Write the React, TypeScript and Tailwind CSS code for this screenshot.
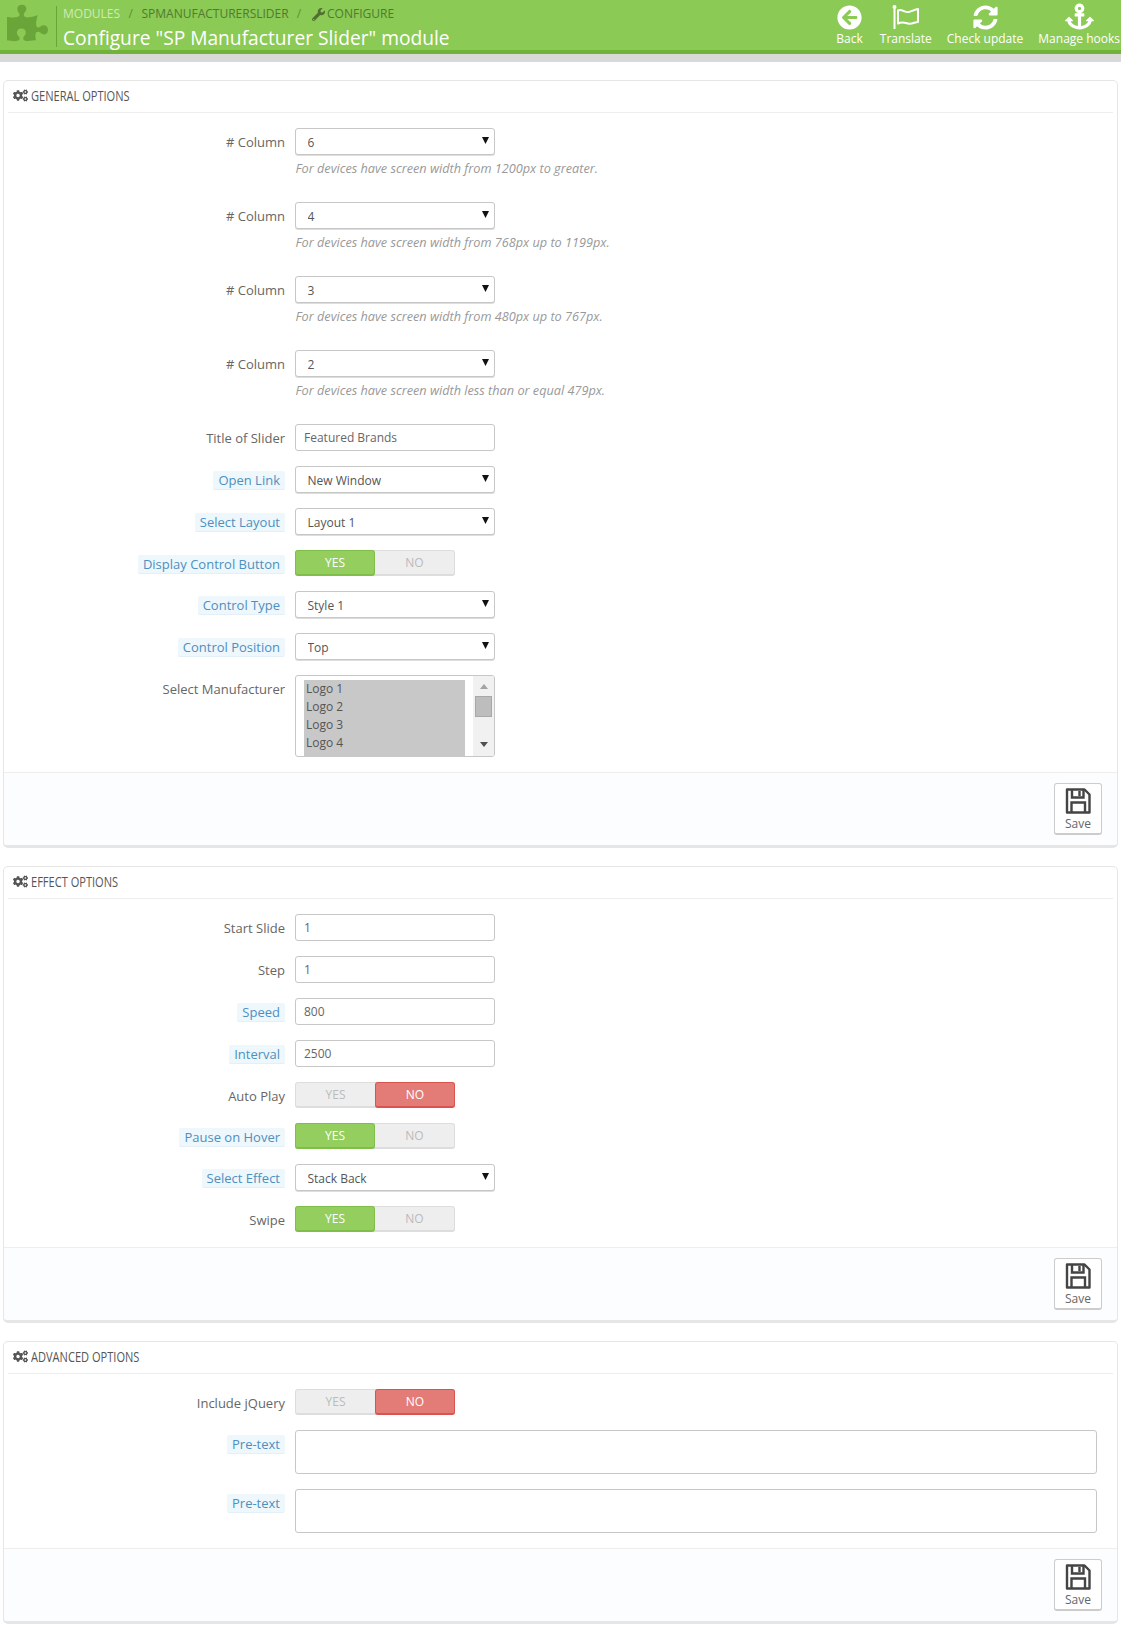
import React from "react";
import { FaArrowCircleLeft, FaSyncAlt, FaAnchor, FaPuzzlePiece, FaWrench, FaCogs } from "react-icons/fa";

function Label({ text, hint, top, low }: { text: string; hint?: boolean; top?: boolean; low?: boolean }) {
  return (
    <div className={`w-[291px] shrink-0 flex justify-end ${top ? "items-start" : "items-center"} pr-[10px] ${top ? "pt-px" : low || !hint ? "pt-[3px]" : "pt-px"}`}>
      {hint ? (
        <span className={`bg-[#edf7fc] text-[#4d8fc0] px-[5px] h-[19px] leading-[19px] rounded-[2px] border-b border-[#e3f0f7] ${top ? "mt-[4px]" : ""}`}>{text}</span>
      ) : (
        <span className={`text-[#666] ${top ? "mt-[4px]" : ""}`}>{text}</span>
      )}
    </div>
  );
}

function Row({ label, hint, children, help, top, low }: { label: string; hint?: boolean; children: React.ReactNode; help?: string; top?: boolean; low?: boolean }) {
  return (
    <div className="mb-[15px]">
      <div className="flex">
        <Label text={label} hint={hint} top={top} low={low} />
        {children}
      </div>
      {help && (
        <div className="pl-[291.5px] h-[32px] pt-[4px] text-[12.7px] italic leading-[18px] text-[#999]">{help}</div>
      )}
    </div>
  );
}

function Select({ value }: { value: string }) {
  return (
    <div className="relative w-[200px] h-[27px]">
      <select className="appearance-none w-full h-full bg-white border border-[#c7c7c7] rounded-[3px] pl-[11.5px] pt-[2px] text-[12px] text-[#555] outline-none shadow-[0_1px_0_#ddd]" defaultValue={value}>
        <option>{value}</option>
      </select>
      <svg className="absolute right-[6px] top-[9px]" width="7" height="7" viewBox="0 0 7 7"><path d="M0 0h7L3.5 7z" fill="#111" /></svg>
    </div>
  );
}

function TextInput({ value }: { value: string }) {
  return (
    <input
      readOnly
      value={value}
      className="w-[200px] h-[27px] bg-white border border-[#c7c7c7] rounded-[3px] px-[8px] text-[12px] text-[#666] outline-none"
    />
  );
}

function Toggle({ on }: { on: boolean }) {
  return (
    <div className="flex w-[160px] h-[26px] rounded-[3px] bg-[#eee] border border-[#ddd] border-b-2 text-[12px] leading-[24px] text-center text-[#bbb]">
      {on ? (
        <>
          <div className="w-[80px] -ml-px -mt-px h-[26px] shrink-0 rounded-[3px] bg-[#93ce5e] border border-[#7fbf49] border-b-2 text-white font-medium">YES</div>
          <div className="flex-1">NO</div>
        </>
      ) : (
        <>
          <div className="flex-1">YES</div>
          <div className="w-[80px] -mr-px -mt-px h-[26px] shrink-0 rounded-[3px] bg-[#e37c77] border border-[#d9534f] border-b-2 text-white font-medium">NO</div>
        </>
      )}
    </div>
  );
}

function ListBox() {
  return (
    <div className="flex w-[200px] h-[82px] bg-white border border-[#c7c7c7] rounded-[3px] overflow-hidden">
      <div className="ml-[8px] mt-[4px] w-[161px] bg-[#c8c8c8] text-[#555] text-[12px] leading-[18px] pl-[2px]">
        <div>Logo 1</div>
        <div>Logo 2</div>
        <div>Logo 3</div>
        <div>Logo 4</div>
      </div>
      <div className="ml-auto w-[21px] bg-[#f1f1f1] flex flex-col items-center">
        <svg className="mt-[8px]" width="8" height="5" viewBox="0 0 8 5"><path d="M4 0l4 5H0z" fill="#a3a3a3" /></svg>
        <div className="mt-[7px] w-[17px] h-[21px] bg-[#bdbdbd] border border-[#a8a8a8]" />
        <svg className="mt-[25px]" width="8" height="5" viewBox="0 0 8 5"><path d="M0 0h8L4 5z" fill="#505050" /></svg>
      </div>
    </div>
  );
}

function SaveIcon() {
  return (
    <svg className="mt-[3px]" width="26" height="28" viewBox="0 0 26 28" fill="none" stroke="#444" strokeWidth="2.4">
      <path d="M2 2.5H19.5L24.5 7.5V25.5H2Z" strokeLinejoin="round" />
      <path d="M7 2.5V10.5H18.5V2.5" />
      <path d="M6.5 25.5V15.5H20V25.5" />
      <path d="M14.5 4V9" />
    </svg>
  );
}

function FlagIcon() {
  return (
    <svg width="28" height="26" viewBox="0 0 28 26" fill="none" stroke="white">
      <circle cx="2.5" cy="3" r="2" fill="white" stroke="none" />
      <path d="M2.5 3V25" strokeWidth="2" />
      <path d="M6 6.5C10 4.5 13 9 17 8C20 7.2 23 5.5 26 5V18C23 18 20 20.5 16 19.5C13 18.7 10 17.5 6 19.5Z" strokeWidth="2" strokeLinejoin="round" />
    </svg>
  );
}

function Panel({ title, children }: { title: string; children: React.ReactNode }) {
  return (
    <section className="mx-[3px] border border-[#e6e6e6] border-b-[3px] rounded-[5px] bg-white">
      <div className="mx-[4px] h-[32px] border-b border-[#eee] flex items-center pl-[5px] pb-[2px] gap-[3px] text-[#555]">
        <FaCogs className="w-[15px] h-[15px]" />
        <span className="text-[14px] uppercase origin-left scale-x-[0.79] whitespace-nowrap">{title}</span>
      </div>
      <div className="pt-[15px]">{children}</div>
      <div className="h-[73px] bg-[#fcfdfe] border-t border-[#eee] rounded-b-[4px] flex justify-end items-start pt-[10px] pr-[15px]">
        <button className="w-[48px] h-[52px] bg-white border border-[#ccc] border-b-2 rounded-[3px] flex flex-col items-center text-[12px] text-[#666] leading-[16px]">
          <SaveIcon />
          <span className="mt-px">Save</span>
        </button>
      </div>
    </section>
  );
}

function HeaderAction({ icon, label, className }: { icon: React.ReactNode; label: string; className?: string }) {
  return (
    <div className={`flex flex-col items-center whitespace-nowrap ${className ?? ""}`}>
      <div className="h-[28px] mt-[3px] flex items-center justify-center">{icon}</div>
      <div className="text-[12px] leading-[16px]">{label}</div>
    </div>
  );
}

export default function App() {
  return (
    <div className="w-[1121px] h-[1627px] overflow-hidden bg-white font-['Open_Sans',sans-serif] text-[13px]">
      <header className="h-[54px] bg-[#8bca55] border-b-[4px] border-[#71b238] flex text-white overflow-hidden">
        <FaPuzzlePiece className="ml-[7px] mt-[4px] w-[41px] h-[38px] text-[#6aa53a] shrink-0" />
        <div className="ml-[8px] mt-[6px] h-[41px] border-l border-[#6aa53a] pl-[6px]">
          <div className="flex items-center h-[16px] text-[12px] uppercase">
            <span className="text-[#cfeab4]">Modules</span>
            <span className="text-[#5f8f3a] mx-[8.5px]">/</span>
            <span className="text-[#4f7a30]">spmanufacturerslider</span>
            <span className="text-[#5f8f3a] mx-[8px]">/</span>
            <FaWrench className="w-[13px] h-[13px] text-[#4f6f30] ml-[3px] mr-[2px]" />
            <span className="text-[#4f7a30]">Configure</span>
          </div>
          <div className="text-[19.2px] leading-[28px] mt-[2px] whitespace-nowrap">Configure "SP Manufacturer Slider" module</div>
        </div>
        <div className="ml-auto flex gap-[15px] mr-[1px]">
          <HeaderAction className="mr-[2px]" icon={<FaArrowCircleLeft className="w-[25px] h-[25px]" />} label="Back" />
          <HeaderAction icon={<FlagIcon />} label="Translate" />
          <HeaderAction icon={<FaSyncAlt className="w-[25px] h-[25px]" />} label="Check update" />
          <HeaderAction icon={<FaAnchor className="w-[29px] h-[29px] -mt-[2px]" />} label="Manage hooks" />
        </div>
      </header>
      <div className="h-[8px] bg-[#d9d9d9]" />
      <div className="h-[18px]" />

      <Panel title="General options">
        <Row label="# Column" help="For devices have screen width from 1200px to greater."><Select value="6" /></Row>
        <Row label="# Column" help="For devices have screen width from 768px up to 1199px."><Select value="4" /></Row>
        <Row label="# Column" help="For devices have screen width from 480px up to 767px."><Select value="3" /></Row>
        <Row label="# Column" help="For devices have screen width less than or equal 479px."><Select value="2" /></Row>
        <Row label="Title of Slider"><TextInput value="Featured Brands" /></Row>
        <Row label="Open Link" hint><Select value="New Window" /></Row>
        <Row label="Select Layout" hint><Select value="Layout 1" /></Row>
        <Row label="Display Control Button" hint low><Toggle on /></Row>
        <Row label="Control Type" hint><Select value="Style 1" /></Row>
        <Row label="Control Position" hint><Select value="Top" /></Row>
        <Row label="Select Manufacturer" top><ListBox /></Row>
      </Panel>

      <div className="h-[18px]" />

      <Panel title="Effect options">
        <Row label="Start Slide"><TextInput value="1" /></Row>
        <Row label="Step"><TextInput value="1" /></Row>
        <Row label="Speed" hint><TextInput value="800" /></Row>
        <Row label="Interval" hint><TextInput value="2500" /></Row>
        <Row label="Auto Play"><Toggle on={false} /></Row>
        <Row label="Pause on Hover" hint low><Toggle on /></Row>
        <Row label="Select Effect" hint><Select value="Stack Back" /></Row>
        <Row label="Swipe"><Toggle on /></Row>
      </Panel>

      <div className="h-[18px]" />

      <Panel title="Advanced options">
        <Row label="Include jQuery"><Toggle on={false} /></Row>
        <Row label="Pre-text" hint top><textarea readOnly className="w-[802px] h-[44px] border border-[#c7c7c7] rounded-[3px] resize-none outline-none" /></Row>
        <Row label="Pre-text" hint top><textarea readOnly className="w-[802px] h-[44px] border border-[#c7c7c7] rounded-[3px] resize-none outline-none" /></Row>
      </Panel>
    </div>
  );
}
